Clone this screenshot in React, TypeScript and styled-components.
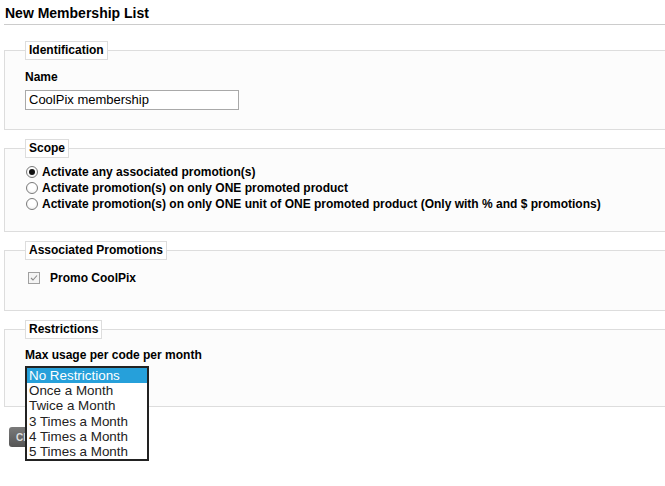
import { createGlobalStyle } from "styled-components";
import styled, { css } from "styled-components";

const GlobalStyle = createGlobalStyle`
  html {
    overflow: hidden;
  }
  html, body {
    margin: 0;
    padding: 0;
    background: #ffffff;
  }
  body {
    font-family: "Liberation Sans", Arial, sans-serif;
    color: #000;
  }
`;

const Page = styled.div`
  width: 700px;
  min-height: 486px;
  position: relative;
  padding-top: 5px;
  box-sizing: border-box;
`;

const Title = styled.h1`
  margin: 0 0 0 5px;
  font-size: 14px;
  line-height: 16px;
  font-weight: bold;
`;

const Rule = styled.div`
  margin: 3px 0 16px 4px;
  height: 1px;
  background: #cccccc;
`;

const Fieldset = styled.fieldset<{ padTop: number; padBottom: number }>`
  margin: 0 0 9px 4px;
  padding: ${({ padTop, padBottom }) => `${padTop}px 20px ${padBottom}px`};
  border: 1px solid #dddddd;
  border-right: none;
  background: #fcfcfc;
  min-width: 0;
`;

const Legend = styled.legend`
  padding: 0 3px;
  margin-left: 0;
  border: 1px solid #dddddd;
  background: #ffffff;
  font-size: 12px;
  line-height: 17px;
  font-weight: bold;
`;

const FieldLabel = styled.div`
  font-size: 12px;
  line-height: 15px;
  font-weight: bold;
  margin-bottom: 5px;
`;

const TextInput = styled.div`
  box-sizing: border-box;
  width: 214px;
  height: 20px;
  border: 1px solid #a9a9a9;
  background: #ffffff;
  padding: 0 3px;
  font-size: 13px;
  line-height: 18px;
`;

const OptionRow = styled.label`
  display: flex;
  align-items: center;
  height: 16px;
  font-size: 12px;
  font-weight: bold;
  gap: 4px;
`;

const RadioDot = styled.span<{ checked?: boolean }>`
  box-sizing: border-box;
  width: 12px;
  height: 12px;
  margin-left: 1px;
  border-radius: 50%;
  border: 1px solid #7a7a7a;
  background: radial-gradient(circle at 50% 40%, #ffffff 40%, #e6e6e6 100%);
  display: flex;
  align-items: center;
  justify-content: center;
  ${({ checked }) =>
    checked &&
    css`
      &::after {
        content: "";
        width: 6px;
        height: 6px;
        border-radius: 50%;
        background: #111;
      }
    `}
`;

const CheckRow = styled.label`
  display: flex;
  align-items: center;
  height: 18px;
  font-size: 12px;
  font-weight: bold;
  gap: 10px;
  padding-left: 3px;
`;

const CheckBox = styled.span`
  box-sizing: border-box;
  width: 12px;
  height: 12px;
  border: 1px solid #a0a0a0;
  background: #f4f4f4;
  display: flex;
  align-items: center;
  justify-content: center;
`;

const SelectSpace = styled.div`
  height: 20px;
`;

const ListBox = styled.div`
  position: absolute;
  left: 25px;
  top: 366px;
  width: 124px;
  box-sizing: border-box;
  border: 2px solid #222222;
  background: #ffffff;
  z-index: 2;
`;

const ListItem = styled.div<{ selected?: boolean }>`
  font-size: 13.4px;
  line-height: 15.2px;
  padding: 0 2px;
  color: ${({ selected }) => (selected ? "#ffffff" : "#222222")};
  background: ${({ selected }) => (selected ? "#26a0da" : "transparent")};
  white-space: nowrap;
`;

const CreateButton = styled.button`
  margin: 11px 0 0 9px;
  height: 20px;
  padding: 0 7px;
  border: none;
  border-radius: 3px;
  background: linear-gradient(#7a7a7a, #555555);
  color: #dddddd;
  font-family: "Liberation Sans", Arial, sans-serif;
  font-size: 10px;
  font-weight: bold;
  text-transform: uppercase;
`;

const scopeOptions = [
  "Activate any associated promotion(s)",
  "Activate promotion(s) on only ONE promoted product",
  "Activate promotion(s) on only ONE unit of ONE promoted product (Only with % and $ promotions)",
];

const usageOptions = [
  "No Restrictions",
  "Once a Month",
  "Twice a Month",
  "3 Times a Month",
  "4 Times a Month",
  "5 Times a Month",
];

export default function App() {
  return (
    <Page>
      <GlobalStyle />
      <Title>New Membership List</Title>
      <Rule />

      <Fieldset padTop={10} padBottom={19}>
        <Legend>Identification</Legend>
        <FieldLabel>Name</FieldLabel>
        <TextInput>CoolPix membership</TextInput>
      </Fieldset>

      <Fieldset padTop={6} padBottom={19}>
        <Legend>Scope</Legend>
        {scopeOptions.map((opt, i) => (
          <OptionRow key={opt}>
            <RadioDot checked={i === 0} />
            {opt}
          </OptionRow>
        ))}
      </Fieldset>

      <Fieldset padTop={9} padBottom={23}>
        <Legend>Associated Promotions</Legend>
        <CheckRow>
          <CheckBox>
            <svg width="8" height="8" viewBox="0 0 8 8">
              <path d="M1 4 L3 6 L7 1.5" fill="none" stroke="#8a8a8a" strokeWidth="1.1" />
            </svg>
          </CheckBox>
          Promo CoolPix
        </CheckRow>
      </Fieldset>

      <Fieldset padTop={9} padBottom={18}>
        <Legend>Restrictions</Legend>
        <FieldLabel>Max usage per code per month</FieldLabel>
        <SelectSpace />
      </Fieldset>

      <CreateButton>Create</CreateButton>

      <ListBox>
        {usageOptions.map((opt, i) => (
          <ListItem key={opt} selected={i === 0}>
            {opt}
          </ListItem>
        ))}
      </ListBox>
    </Page>
  );
}
